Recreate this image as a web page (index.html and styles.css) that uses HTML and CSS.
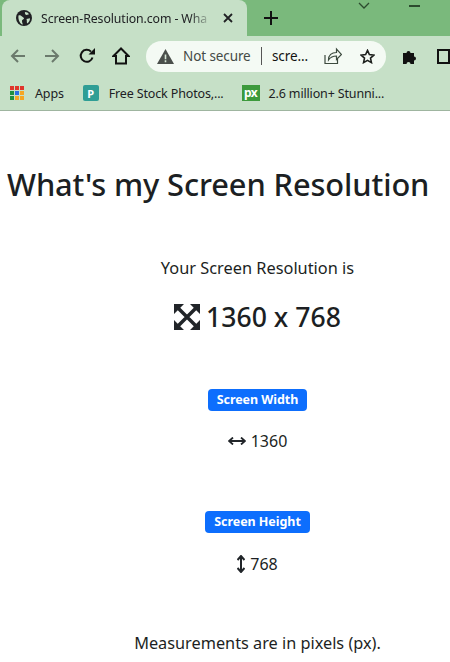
FILE: index.html
```html
<!DOCTYPE html>
<html lang="en">
<head>
<meta charset="utf-8">
<title>Screen Resolution</title>
<link rel="stylesheet" href="styles.css">
</head>
<body>
<header class="browser">
  <div class="tabstrip">
    <div class="tab">
      <svg class="globe" viewBox="0 0 16 16" width="16" height="16"><circle cx="8" cy="8" r="8" fill="#202124"/><path d="M2.500 5.500c1.500-.8 2.500 0 3.500 1s2 1 2 2-2 1-2 2 0 2 1 4l-1.500-.3C3.500 13 2 9 2.500 5.500zM9 2c2 0 3 .8 4 2.300l-2.500.7C9.500 5 8.500 3.500 9 2zM10.500 9l3.500-.8c0 2.500-1 3.800-2.800 5.200-.7-1 0-2.800-.7-4.400z" fill="#c6e0c7"/></svg>
      <span class="tab-title">Screen-Resolution.com - Wha</span>
      <svg class="tab-close" viewBox="0 0 10 10" width="10" height="10"><path d="M1 1l8 8M9 1l-8 8" stroke="#202124" stroke-width="1.800"/></svg>
    </div>
    <svg class="newtab" viewBox="0 0 14 14" width="14" height="14"><path d="M7 0v14M0 7h14" stroke="#111" stroke-width="2"/></svg>
    <svg class="chev" viewBox="0 0 12 8" width="12" height="8"><path d="M1 1l5 5 5-5" fill="none" stroke="#2c4a2e" stroke-width="1.300"/></svg>
    <span class="minimize"></span>
  </div>
  <div class="toolbar">
    <svg class="nav nav-back" viewBox="0 0 16 16" width="16" height="16"><path d="M15 8H2M8 2L2 8l6 6" fill="none" stroke="#6b7a6c" stroke-width="2"/></svg>
    <svg class="nav nav-fwd" viewBox="0 0 16 16" width="16" height="16"><path d="M1 8h13M8 2l6 6-6 6" fill="none" stroke="#6b7a6c" stroke-width="2"/></svg>
    <svg class="nav nav-reload" viewBox="0 0 16 16" width="16" height="16"><path d="M13.500 9.500A6 6 0 1 1 12 3.600" fill="none" stroke="#111" stroke-width="2"/><path d="M9.500 6.500H16V0z" fill="#111"/></svg>
    <svg class="nav nav-home" viewBox="0 0 18 18" width="18" height="18"><path d="M9 1.500L1.500 9H4v7.500h10V9h2.500z" fill="none" stroke="#111" stroke-width="2"/></svg>
    <div class="omnibox">
      <svg class="warn" viewBox="0 0 16 14" width="17" height="15"><path d="M8 0l8 14H0z" fill="#4a4f4b"/><path d="M8 5v4.500M8 10.500V12.500" stroke="#d8e8d8" stroke-width="1.500"/></svg>
      <span class="not-secure">Not secure</span>
      <span class="divider"></span>
      <span class="url">scre...</span>
      <svg class="share" viewBox="0 0 18 18" width="18" height="18"><path d="M1 8v8.500h12.500V12" fill="none" stroke="#3c4a3e" stroke-width="1.200"/><path d="M4.500 13c0-5 3-7.500 8-7.500V2l5 5.500-5 5V9c-3.500 0-6 1-8 4z" fill="none" stroke="#3c4a3e" stroke-width="1.200"/></svg>
      <svg class="star" viewBox="0 0 16 16" width="15" height="15"><path d="M8 1.500l2 4.500 4.800.5-3.600 3.200 1 4.800L8 12.100 3.800 14.500l1-4.800L1.200 6.500 6 6z" fill="none" stroke="#1c1f1c" stroke-width="1.700"/></svg>
    </div>
    <svg class="puzzle" viewBox="0 0 16 16" width="16" height="16"><path d="M1 5h3.500a2 2 0 1 1 4 0H12v3.500a2 2 0 1 1 0 4V16H8.500a2 2 0 1 0-4 0H1z" fill="#111"/></svg>
    <span class="panel"></span>
  </div>
  <div class="bookmarks">
    <span class="mark mark-apps">
      <span class="apps-grid"><i class="c-r"></i><i class="c-r"></i><i class="c-r"></i><i class="c-g"></i><i class="c-b"></i><i class="c-o"></i><i class="c-g"></i><i class="c-o"></i><i class="c-o"></i></span>
      <span>Apps</span>
    </span>
    <span class="mark mark-free">
      <span class="pexels">P</span>
      <span>Free Stock Photos,...</span>
    </span>
    <span class="mark mark-px">
      <span class="pixabay">px</span>
      <span>2.6 million+ Stunni...</span>
    </span>
  </div>
</header>
<main class="page">
  <h1 class="title">What's my Screen Resolution</h1>
  <div class="center">
    <p class="lead">Your Screen Resolution is</p>
    <p class="res">
      <svg class="res-icon" viewBox="0 0 26 26" width="26" height="26"><path d="M3 3L23 23M23 3L3 23" stroke="#212529" stroke-width="3.500"/><path d="M0 0h10L0 10zM26 0v10L16 0zM0 26V16l10 10zM26 26H16l10-10z" fill="#212529"/></svg>
      <span>1360 x 768</span>
    </p>
    <span class="badge badge-w">Screen Width</span>
    <p class="val val-w"><svg viewBox="0 0 18 8" width="18" height="8"><path d="M1 4h16M5 .5L1 4l4 3.500M13 .5L17 4l-4 3.500" fill="none" stroke="#212529" stroke-width="1.800"/></svg> 1360</p>
    <span class="badge badge-h">Screen Height</span>
    <p class="val val-h"><svg viewBox="0 0 8 18" width="8" height="18"><path d="M4 1v16M.5 5L4 1l3.500 4M.5 13L4 17l3.500-4" fill="none" stroke="#212529" stroke-width="2"/></svg> 768</p>
    <p class="note">Measurements are in pixels (px).</p>
  </div>
</main>
</body>
</html>
```
FILE: styles.css
```css
* { box-sizing: border-box; }
html, body { margin: 0; height: 662px; width: 450px; overflow: hidden; background: #fff; }
body { font-family: "Noto Sans", "Open Sans", sans-serif; color: #1c1f23; }

.browser { background: #c6e0c7; height: 111px; border-bottom: 1px solid #9fb5a0; color: #202124; font-size: 13px; }
.tabstrip { position: relative; height: 36px; background: #7ab97c; display: flex; align-items: center; padding-left: 2px; overflow: hidden; }
.tab { width: 245px; height: 36px; background: #c6e0c7; border-radius: 8px 8px 0 0; display: flex; align-items: center; padding-left: 14px; }
.globe { flex: none; }
.tab-title { margin-left: 9px; width: 175px; white-space: nowrap; font-size: 12.300px; letter-spacing: -0.1px; -webkit-mask-image: linear-gradient(to right, #000 85%, transparent 98%); mask-image: linear-gradient(to right, #000 85%, transparent 98%); }
.tab-close { margin-left: 7px; flex: none; }
.newtab { margin-left: 17px; }
.chev { position: absolute; left: 358px; top: 2px; }
.minimize { position: absolute; left: 409px; top: 5px; width: 11px; height: 2px; background: #2c4a2e; }

.toolbar { height: 40px; display: flex; align-items: center; padding-left: 10px; }
.nav { flex: none; }
.nav-fwd { margin-left: 18px; }
.nav-reload { margin-left: 19px; }
.nav-home { margin-left: 17px; }
.omnibox { margin-left: 16px; width: 240px; height: 31px; border-radius: 16px; background: #f4faf4; display: flex; align-items: center; padding-left: 11px; flex: none; }
.warn { flex: none; }
.not-secure { margin-left: 9px; width: 71px; white-space: nowrap; font-size: 13.500px; letter-spacing: -0.1px; color: #444a46; }
.divider { width: 1px; height: 18px; background: #555; margin-left: 7px; }
.url { margin-left: 10px; font-size: 13.500px; letter-spacing: -0.1px; color: #111; width: 42px; white-space: nowrap; }
.share { margin-left: 10px; flex: none; }
.star { margin-left: 18px; flex: none; }
.puzzle { margin-left: 16px; flex: none; }
.panel { margin-left: 19px; width: 14px; height: 15px; border: 2px solid #111; border-right-width: 3px; flex: none; }

.bookmarks { height: 34px; display: flex; align-items: center; padding-left: 10px; font-size: 12.500px; letter-spacing: -0.15px; }
.mark { display: flex; align-items: center; white-space: nowrap; }
.mark-apps { gap: 11px; }
.mark-free { margin-left: 19px; gap: 10px; }
.mark-px { margin-left: 18px; gap: 9px; }
.apps-grid { display: grid; grid-template-columns: repeat(3, 4px); grid-auto-rows: 4px; gap: 1px; }
.apps-grid i { display: block; }
.c-r { background: #e0352b; }
.c-g { background: #1f8f3f; }
.c-b { background: #2a6fe0; }
.c-o { background: #f5a623; }
.pexels { width: 16px; height: 16px; border-radius: 2px; background: #2f9e95; color: #fff; font-size: 11px; font-weight: 700; display: flex; align-items: center; justify-content: center; letter-spacing: 0; }
.pixabay { width: 18px; height: 16px; background: #3c9a3c; color: #fff; font-size: 12px; font-weight: 700; line-height: 15px; text-align: center; letter-spacing: -0.5px; }

.page { width: 515px; }
.title { margin: 51px 0 0; padding-left: 7px; font-size: 30.800px; font-weight: 500; line-height: 44px; white-space: nowrap; letter-spacing: -0.1px; }
.center { display: flex; flex-direction: column; align-items: center; }
.lead { margin: 50px 0 0; font-size: 16.350px; line-height: 24px; }
.res { margin: 19px 0 0; font-size: 26.600px; font-weight: 500; line-height: 36px; display: flex; align-items: center; gap: 6px; }
.badge { background: #0d6efd; color: #fff; font-size: 12.500px; font-weight: 700; border-radius: 4px; height: 22px; line-height: 22px; padding: 0 9px; white-space: nowrap; letter-spacing: -0.05px; }
.badge-w { margin-top: 54px; }
.badge-h { margin-top: 58px; }
.val { margin: 18px 0 0; font-size: 16px; line-height: 24px; display: flex; align-items: center; gap: 5px; }
.val-h { margin-top: 19px; }
.note { margin: 55px 0 0; font-size: 16.300px; line-height: 24px; }
```
